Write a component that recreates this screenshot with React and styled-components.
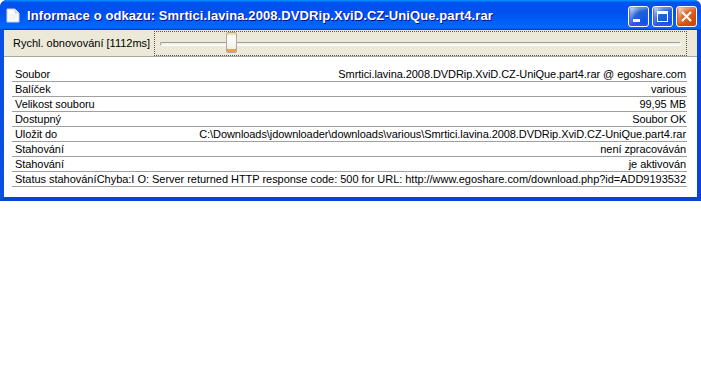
import React from 'react';
import styled, { createGlobalStyle } from 'styled-components';

const GlobalStyle = createGlobalStyle`
  html, body {
    margin: 0;
    background: #ffffff;
  }
  body {
    font-family: "Liberation Sans", Arial, sans-serif;
  }
`;

const Window = styled.div`
  width: 701px;
  display: flex;
  flex-direction: column;
  border-radius: 7px 7px 0 0;
  overflow: hidden;
  background: #0831d9;
`;

const TitleBar = styled.div`
  height: 30px;
  box-sizing: border-box;
  display: flex;
  align-items: center;
  padding: 0 4px 0 6px;
  background: linear-gradient(180deg, #0997ff, #0053ee 8%, #0050ee 40%, #06f 88%, #06f 93%, #005bff 95%, #003dd7 96%, #003dd7);
`;

const Title = styled.div`
  margin-left: 7px;
  margin-top: 1px;
  color: #ffffff;
  font-family: "Liberation Sans", Arial, sans-serif;
  font-weight: bold;
  font-size: 13px;
  letter-spacing: 0.09px;
  text-shadow: 1px 1px #0f1089;
  white-space: nowrap;
`;

const Controls = styled.div`
  margin-left: auto;
  display: flex;
  gap: 3px;
  padding-top: 3px;
`;

const CtrlButton = styled.div`
  width: 21px;
  height: 21px;
  box-sizing: border-box;
  border: 1px solid #ffffff;
  border-radius: 3px;
  display: flex;
  align-items: center;
  justify-content: center;
  background: ${p => p.close
    ? 'radial-gradient(circle at 90% 90%, #cc4600 0%, #dc6527 55%, #fff 100%)'
    : 'radial-gradient(circle at 90% 90%, #0054e9 0%, #2263d5 55%, #fff 100%)'};
  box-shadow: ${p => p.close
    ? 'inset 0 -1px 2px 1px #da4600'
    : 'inset 0 -1px 2px 1px #4646ff'};
`;

const Frame = styled.div`
  border: 4px solid #0842d8;
  border-top: 0;
  border-left-color: #0a4fe4;
  border-right-color: #0842d8;
  background: #ece9d8;
`;

const Toolbar = styled.div`
  height: 26px;
  display: flex;
  align-items: center;
  background: #ece9d8;
  border-bottom: 1px solid #aca899;
  padding-left: 9px;
`;

const SpeedLabel = styled.span`
  font-size: 11px;
  color: #000;
  white-space: nowrap;
`;

const Slider = styled.div`
  position: relative;
  margin-left: 4px;
  width: 533px;
  height: 25px;
  box-sizing: border-box;
  border: 1px dotted #555;
`;

const Track = styled.div`
  position: absolute;
  left: 5px;
  right: 5px;
  top: 10px;
  height: 2px;
  border: 1px solid #9d9c99;
  border-right-color: #fff;
  border-bottom-color: #fff;
  background: #f4f3ee;
  border-radius: 2px;
`;

const Thumb = styled.div`
  position: absolute;
  top: 0px;
  width: 11px;
  height: 21px;
  box-sizing: border-box;
  border-radius: 2px;
  border: 1px solid #b2ab97;
  background: linear-gradient(180deg, #f3f3ef 0%, #fcfcfb 30%, #f2f1ea 80%);
  box-shadow: inset 0 -3px 0 #e3a82c, inset 0 2px 0 #f1deaa;
`;

const Content = styled.div`
  background: #ffffff;
  padding: 10px 10px 10px 8px;
`;

const Row = styled.div`
  height: 14px;
  display: flex;
  justify-content: space-between;
  align-items: center;
  border-bottom: 1px solid #a0a0a0;
  padding: 0 1px 0 3px;
  font-size: 11px;
  line-height: 14px;
  letter-spacing: ${p => (p.$long ? '-0.03px' : '-0.07px')};
  color: #000;
  white-space: nowrap;
  overflow: hidden;
`;

const Label = styled.span`
  flex-shrink: 0;
`;

const Value = styled.span`
  text-align: right;
`;

const rows = [
  ['Soubor', 'Smrtici.lavina.2008.DVDRip.XviD.CZ-UniQue.part4.rar @ egoshare.com'],
  ['Balíček', 'various'],
  ['Velikost souboru', '99,95 MB'],
  ['Dostupný', 'Soubor OK'],
  ['Uložit do', 'C:\\Downloads\\jdownloader\\downloads\\various\\Smrtici.lavina.2008.DVDRip.XviD.CZ-UniQue.part4.rar'],
  ['Stahování', 'není zpracováván'],
  ['Stahování', 'je aktivován'],
  ['Status stahování', 'Chyba:I O: Server returned HTTP response code: 500 for URL: http://www.egoshare.com/download.php?id=ADD9193532'],
];

function DocIcon() {
  return (
    <svg width="14" height="15" viewBox="0 0 14 15">
      <path d="M1 1h8l4 4v9H1z" fill="#ffffff" stroke="#c9d4e8" strokeWidth="1" />
      <path d="M9 1v4h4" fill="#dfe6f2" stroke="#c9d4e8" strokeWidth="1" />
      <path d="M3 7h8M3 9h8M3 11h6" stroke="#e6eaf2" strokeWidth="1" />
    </svg>
  );
}

const slider = { min: 0, max: 8000, value: 1112 };

export default function App() {
  const pct = (slider.value - slider.min) / (slider.max - slider.min);
  return (
    <>
      <GlobalStyle />
      <Window>
        <TitleBar>
          <DocIcon />
          <Title>Informace o odkazu: Smrtici.lavina.2008.DVDRip.XviD.CZ-UniQue.part4.rar</Title>
          <Controls>
            <CtrlButton>
              <svg width="19" height="19" viewBox="0 0 19 19">
                <rect x="4" y="12" width="7" height="3" fill="#fff" />
              </svg>
            </CtrlButton>
            <CtrlButton>
              <svg width="19" height="19" viewBox="0 0 19 19">
                <rect x="4.5" y="4.5" width="10" height="10" fill="none" stroke="#fff" strokeWidth="1" />
                <rect x="4" y="4" width="11" height="3" fill="#fff" />
              </svg>
            </CtrlButton>
            <CtrlButton close>
              <svg width="19" height="19" viewBox="0 0 19 19">
                <path d="M5 5l9 9M14 5l-9 9" stroke="#fff" strokeWidth="2.2" />
              </svg>
            </CtrlButton>
          </Controls>
        </TitleBar>
        <Frame>
          <Toolbar>
            <SpeedLabel>Rychl. obnovování [1112ms]</SpeedLabel>
            <Slider>
              <Track />
              <Thumb style={{ left: `${Math.round(pct * 511)}px` }} />
            </Slider>
          </Toolbar>
          <Content>
            {rows.map(([k, v], i) => (
              <Row key={i} $long={i === rows.length - 1}>
                <Label>{k}</Label>
                <Value>{v}</Value>
              </Row>
            ))}
          </Content>
        </Frame>
      </Window>
    </>
  );
}
